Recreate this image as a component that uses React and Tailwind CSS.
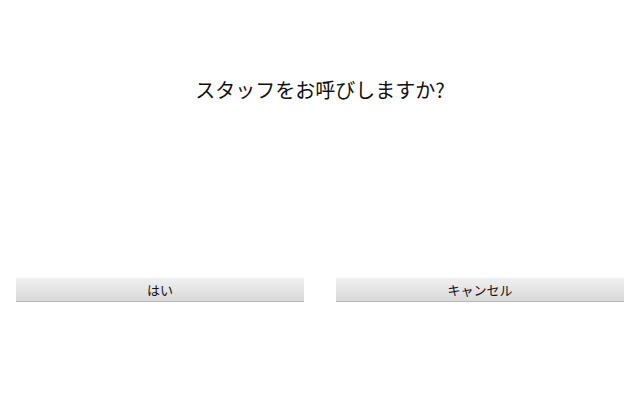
export default function App() {
  const font = { fontFamily: '"Noto Sans CJK JP", "Noto Sans", sans-serif' };
  return (
    <div className="w-[640px] h-[400px] bg-white flex flex-col" style={font}>
      <div className="pt-[76px] h-[278px]">
        <h1 className="text-center text-[20px] leading-[28px] text-[#111]">スタッフをお呼びしますか?</h1>
      </div>
      <div className="flex gap-[32px] px-[16px]">
        <button className="flex-1 h-[24px] bg-gradient-to-b from-[#f0f0f0] to-[#d9d9d9] border-b border-[#b8b8b8] text-[13px] text-[#111] leading-none flex items-center justify-center">はい</button>
        <button className="flex-1 h-[24px] bg-gradient-to-b from-[#f0f0f0] to-[#d9d9d9] border-b border-[#b8b8b8] text-[13px] text-[#111] leading-none flex items-center justify-center">キャンセル</button>
      </div>
    </div>
  );
}
